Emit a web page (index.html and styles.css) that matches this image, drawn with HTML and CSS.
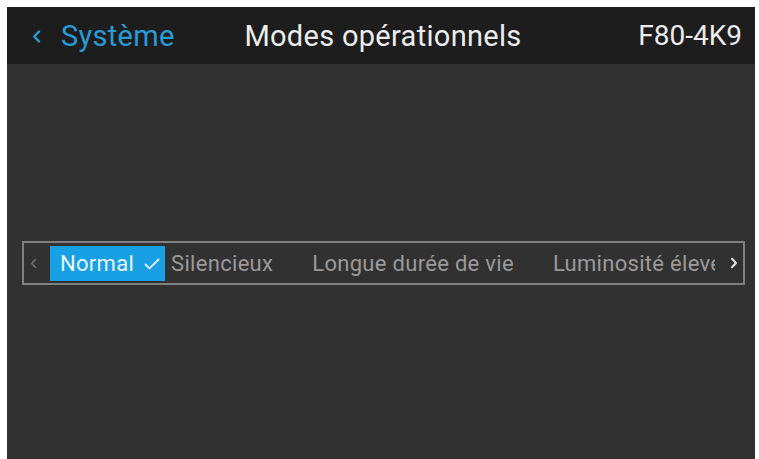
FILE: index.html
```html
<!DOCTYPE html>
<html lang="fr">
<head>
<meta charset="utf-8">
<title>Modes opérationnels</title>
<link rel="stylesheet" href="styles.css">
</head>
<body>
<div class="screen">
  <header class="topbar">
    <div class="back">
      <svg class="back-icon" width="9" height="13" viewBox="0 0 9 13"><path d="M7 1.5 L2.2 6.5 L7 11.5" fill="none" stroke="#2a9ad6" stroke-width="2.4" stroke-linecap="round" stroke-linejoin="round"/></svg>
      <span class="back-label">Système</span>
    </div>
    <div class="title">Modes opérationnels</div>
    <div class="model">F80-4K9</div>
  </header>
  <main class="content">
    <div class="selector">
      <svg class="arrow arrow-left" width="7" height="11" viewBox="0 0 7 11"><path d="M5.5 1.5 L1.8 5.5 L5.5 9.5" fill="none" stroke="#6f6f6f" stroke-width="1.6" stroke-linecap="round" stroke-linejoin="round"/></svg>
      <div class="options">
        <div class="option selected">
          <span>Normal</span>
          <svg class="check" width="16" height="12" viewBox="0 0 16 12"><path d="M1.5 6.5 L5.5 10.3 L14.5 1.5" fill="none" stroke="#e6f5fd" stroke-width="1.8" stroke-linecap="round" stroke-linejoin="round"/></svg>
        </div>
        <div class="option first">Silencieux</div>
        <div class="option">Longue durée de vie</div>
        <div class="option">Luminosité élevée</div>
      </div>
      <svg class="arrow arrow-right" width="8" height="12" viewBox="0 0 8 12"><path d="M2 1.8 L6 6 L2 10.2" fill="none" stroke="#e4e4e4" stroke-width="2" stroke-linecap="round" stroke-linejoin="round"/></svg>
    </div>
  </main>
</div>
</body>
</html>
```

FILE: styles.css
```css
html, body {
  margin: 0;
  padding: 0;
  background: #ffffff;
  height: 100%;
}

body {
  font-family: Roboto, "Liberation Sans", Arial, sans-serif;
  overflow: hidden;
}

.screen {
  margin: 7px 4px 0 7px;
  height: 452px;
  display: flex;
  flex-direction: column;
  background: #323132;
}

.topbar {
  height: 57px;
  flex: 0 0 57px;
  background: #1d1d1e;
  display: grid;
  grid-template-columns: 1fr auto 1fr;
  align-items: center;
  font-size: 29px;
  letter-spacing: 0.3px;
  color: #ececec;
}

.back {
  display: flex;
  align-items: center;
  padding-left: 25px;
  color: #2a9ad6;
}

.back-icon {
  margin-right: 20px;
  margin-top: 1px;
}

.title {
  text-align: center;
  padding-left: 4px;
}

.model {
  text-align: right;
  padding-right: 13px;
  font-size: 28px;
  letter-spacing: 0;
}

.content {
  flex: 1;
  padding-top: 177px;
  padding-left: 15px;
  padding-right: 10px;
}

.selector {
  height: 40px;
  border: 2px solid #7f7f80;
  display: flex;
  align-items: center;
  padding-left: 6px;
}

.arrow-left {
  margin-right: 13px;
}

.options {
  flex: 0 0 665px;
  overflow: hidden;
  display: flex;
  align-items: center;
  white-space: nowrap;
  font-size: 22px;
  letter-spacing: 0.3px;
  color: #9a9a9a;
  gap: 39px;
}

.option.selected {
  background: #199fe6;
  color: #eaf6fd;
  height: 35px;
  display: flex;
  align-items: center;
  padding: 0 5px 0 10px;
  gap: 10px;
}

.option.first {
  margin-left: -33px;
}

.check {
  margin-top: 1px;
}

.arrow-right {
  margin-left: 15px;
}
```
